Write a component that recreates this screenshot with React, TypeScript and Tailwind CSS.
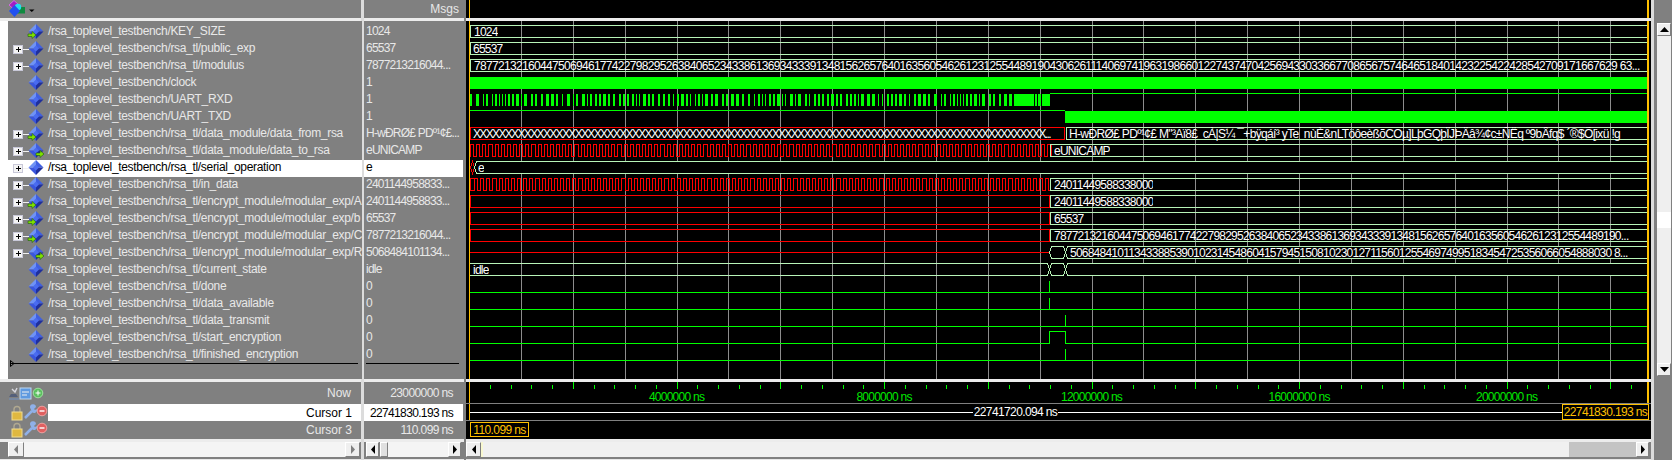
import React from "react";

const RED = "#ff0000";
const GREEN = "#00ff00";
const PALE = "#b8f4b8";
const lx = (x: number) => x - 466;
const gridX = (k: number) => Math.round(lx(469 + 51.88 * k)) + 0.5;

function bus(x0: number, x1: number, color: string) {
  const a = lx(x0) + 0.5, b = lx(x1) + 0.5;
  return <path d={`M${a} 7.5L${a + 2} 1.5H${b - 2}L${b} 7.5L${b - 2} 13.5H${a + 2}Z`} fill="black" stroke={color} />;
}
function busOpen(x0: number) {
  const a = lx(x0) + 0.5, b = lx(1647);
  return <path d={`M${b} 1.5H${a + 2}L${a} 7.5L${a + 2} 13.5H${b}`} fill="black" stroke={PALE} />;
}
function rails(x0: number, x1: number, color: string) {
  const a = lx(x0) + 0.5, b = lx(x1) + 0.5;
  return <path d={`M${a} 1.5H${b}V13.5H${a}Z`} fill="none" stroke={color} />;
}
function dense(x0: number, x1: number) {
  let x = lx(x0) + 0.5;
  const end = lx(x1);
  let d = `M${x} 13.5`;
  let i = 0;
  while (x < end) {
    const w = i % 7 === 3 ? 4 : 3;
    d += `V1.5H${x + w}V13.5H${x + w + 3}`;
    x += w + 3;
    i++;
  }
  return <path d={d} fill="none" stroke={RED} />;
}
function rxdBars() {
  const out: React.ReactNode[] = [];
  let x = 470;
  let s = 37;
  while (x < 1016) {
    s = (s * 73 + 41) % 101;
    const w = s % 4 === 0 ? 1 : s % 4 === 1 ? 3 : 2;
    out.push(<rect key={x} x={lx(x)} y={2} width={w} height={12} fill={GREEN} />);
    x += w + (s % 5 === 0 ? 4 : s % 5 === 1 ? 3 : 2);
  }
  return out;
}

type W = { svg?: React.ReactNode; text?: string; left?: number; w?: number; tc?: string; name: string; value: string; plus?: boolean; arrow?: "l" | "r"; selected?: boolean };

const P = "/rsa_toplevel_testbench/";
const TL = P + "rsa_tl/";
const MOD = TL + "encrypt_module/modular_exp/";
const low = (extra?: React.ReactNode) => (
  <>
    <path d={`M${lx(470)} 13.5H${lx(1647)}`} stroke={GREEN} />
    {extra}
  </>
);
const spike = (x: number) => <path d={`M${lx(x) + 0.5} 2V13`} stroke={GREEN} />;

const XS = "X".repeat(90) + "...";
const rows: W[] = [
  { name: P + "KEY_SIZE", value: "1024", arrow: "l", svg: rails(470, 1648, PALE), text: "1024", left: 474 },
  { name: TL + "public_exp", value: "65537", plus: true, svg: rails(470, 1648, PALE), text: "65537", left: 473 },
  { name: TL + "modulus", value: "7877213216044...", plus: true, svg: rails(470, 1648, PALE), text: "78772132160447506946177422798295263840652343386136934333913481562657640163560546261231255448919043062611140697419631986601227437470425694330336677086567574646518401423225422428542709171667629 63...", left: 474, w: 1172, tc: "tracking-[-0.68px]" },
  { name: P + "clock", value: "1", svg: <><rect x={lx(470)} y={2} width={1177} height={12} fill={GREEN} /><rect x={lx(1647)} y={2} width={1} height={12} fill={RED} /></> },
  { name: P + "UART_RXD", value: "1", svg: <>{rxdBars()}<rect x={lx(1016)} y={2} width={18} height={12} fill={GREEN} /><rect x={lx(1035)} y={2} width={2} height={12} fill={GREEN} /><rect x={lx(1038)} y={2} width={3} height={12} fill={GREEN} /><rect x={lx(1042)} y={2} width={8} height={12} fill={GREEN} /><path d={`M${lx(1050)} 1.5H${lx(1647)}`} stroke={GREEN} /></> },
  { name: P + "UART_TXD", value: "1", svg: <><path d={`M${lx(470)} 1.5H${lx(1065)}`} stroke={GREEN} /><rect x={lx(1065)} y={2} width={582} height={12} fill={GREEN} /></> },
  { name: TL + "data_module/data_from_rsa", value: "H-wÐRØ£ PDº¹¢£...", plus: true, arrow: "l", svg: <>{rails(470, 1064, RED)}{rails(1066, 1648, PALE)}</> },
  { name: TL + "data_module/data_to_rsa", value: "eUNICAMP", plus: true, arrow: "r", svg: <>{dense(470, 1049)}{rails(1050, 1648, PALE)}</>, text: "eUNICAMP", left: 1054 },
  { name: TL + "serial_operation", value: "e", plus: true, selected: true, svg: <>{bus(470, 474, RED)}{busOpen(474)}</>, text: "e", left: 478 },
  { name: TL + "in_data", value: "2401144958833...", plus: true, svg: <>{rails(470, 474, RED)}{dense(474, 1049)}{rails(1050, 1648, PALE)}</>, text: "24011449588338000", left: 1054 },
  { name: MOD + "A", value: "2401144958833...", plus: true, arrow: "l", svg: <>{rails(470, 1049, RED)}{rails(1050, 1648, PALE)}</>, text: "24011449588338000", left: 1054 },
  { name: MOD + "b", value: "65537", plus: true, arrow: "l", svg: <>{rails(470, 1049, RED)}{rails(1050, 1648, PALE)}</>, text: "65537", left: 1054 },
  { name: MOD + "C", value: "7877213216044...", plus: true, arrow: "l", svg: <>{rails(470, 1049, RED)}{rails(1050, 1648, PALE)}</>, text: "787721321604475069461774227982952638406523433861369343339134815626576401635605462612312554489190...", left: 1054, w: 590 },
  { name: MOD + "R", value: "5068484101134...", plus: true, arrow: "r", svg: <><path d={`M${lx(470)} 7.5H${lx(1049)}`} stroke={RED} />{bus(1049, 1065, PALE)}{busOpen(1065)}</>, text: "50684841011343388539010231454860415794515081023012711560125546974995183454725356066054888030 8...", left: 1070, w: 574 },
  { name: TL + "current_state", value: "idle", svg: <><path d={`M${lx(470)} 1.5H${lx(1047) + 0.5}L${lx(1049) + 0.5} 7.5L${lx(1047) + 0.5} 13.5H${lx(470)}`} fill="none" stroke={PALE} />{bus(1049, 1065, PALE)}{busOpen(1065)}</>, text: "idle", left: 473 },
  { name: TL + "done", value: "0", svg: low(spike(1049)) },
  { name: TL + "data_available", value: "0", svg: low(spike(1049)) },
  { name: TL + "data_transmit", value: "0", svg: low(spike(1065)) },
  { name: TL + "start_encryption", value: "0", svg: <path d={`M${lx(470)} 13.5H${lx(1049) + 0.5}V1.5H${lx(1065) + 0.5}V13.5H${lx(1647)}`} fill="none" stroke={GREEN} /> },
  { name: TL + "finished_encryption", value: "0", svg: low(spike(1065)) },
];

function Diamond({ cx, cy, r }: { cx: number; cy: number; r: number }) {
  return (
    <g>
      <polygon points={`${cx - r},${cy} ${cx},${cy - r} ${cx},${cy}`} fill="#6f93f5" />
      <polygon points={`${cx},${cy - r} ${cx + r},${cy} ${cx},${cy}`} fill="#3f5fe0" />
      <polygon points={`${cx - r},${cy} ${cx},${cy + r} ${cx},${cy}`} fill="#3a56dc" />
      <polygon points={`${cx + r},${cy} ${cx},${cy + r} ${cx},${cy}`} fill="#1f2f9c" />
      <polygon points={`${cx - 3},${cy} ${cx},${cy - 3} ${cx + 3},${cy} ${cx},${cy + 3}`} fill="#4a6cf0" />
    </g>
  );
}

function RowIcon({ plus, arrow }: { plus?: boolean; arrow?: "l" | "r" }) {
  const ax = arrow === "l" ? 20 : 28;
  return (
    <svg width={40} height={17} className="shrink-0">
      {plus && (
        <g shapeRendering="crispEdges">
          <path d="M15 8.5H21" stroke="#f0f0f0" />
          <rect x={5.5} y={4.5} width={9} height={8} fill="#f4f4f4" stroke="#c8c8d8" />
          <path d="M7.5 8.5H12.5M10 6V11" stroke="#000" />
        </g>
      )}
      <Diamond cx={28} cy={7.5} r={7.5} />
      {arrow && (
        <path
          d={`M${ax} 10H${ax + 4}V7.5L${ax + 8} 11L${ax + 4} 14.5V12.5H${ax}Z`}
          fill="#7fe000"
          stroke="#1c5a10"
          strokeWidth={0.6}
        />
      )}
    </svg>
  );
}

function Btn({ dir, muted, className }: { dir: "l" | "r"; muted?: boolean; className: string }) {
  return (
    <div className={`flex items-center justify-center bg-[#efefef] border border-t-white border-l-white border-b-[#808080] border-r-[#808080] ${className}`}>
      <svg width={6} height={9}>
        <path d={dir === "l" ? "M5 0V9L1 4.5Z" : "M1 0V9L5 4.5Z"} fill={muted ? "#808080" : "#000"} />
      </svg>
    </div>
  );
}

function NameCol() {
  return (
    <div className="flex w-[361px] shrink-0 flex-col">
      <div className="flex h-[18px] items-center">
        <svg width={36} height={18}>
          <polygon points="14,0.5 19,5 14,9.5 9,5" fill="#a020c0" stroke="#e070f0" strokeWidth={0.8} />
          <rect x={15} y={7} width={10} height={6.5} fill="#108a40" />
          <circle cx={18} cy={7} r={3.2} fill="#20e0f0" />
          <polygon points="14.5,5 20,11 14.5,17 9,11" fill="#2050f0" />
          <path d="M29 9.5H34.5L31.75 12Z" fill="#000" />
        </svg>
      </div>
      <div className="h-[3px] bg-[#ececec]" />
      <div className="relative flex h-[358px] bg-white">
        <div className="w-2 shrink-0" />
        <div className="flex-1 bg-[#808080] pt-[3px]">
          {rows.map((r) => (
            <div key={r.name} className={`flex h-[17px] ${r.selected ? "bg-white text-black" : "text-[#e8e8e8]"}`}>
              <RowIcon plus={r.plus} arrow={r.arrow} />
              <span className="whitespace-nowrap leading-[14px] tracking-[-0.32px]">{r.name}</span>
            </div>
          ))}
          <div className="relative -mt-[1px] ml-[3px] mr-1 h-px bg-black">
            <svg width={5} height={7} className="absolute -left-px -top-[3px]">
              <path d="M0.5 0.5V6.5L4 3.5Z" fill="none" stroke="#000" />
            </svg>
          </div>
        </div>
      </div>
      <div className="h-[3px] bg-[#ececec]" />
      <div className="h-[57px]">
        <div className="flex h-[22px] items-center pl-[8px] pr-[10px] text-[#e8e8e8]">
          <svg width={40} height={16}>
            <path d="M1 12H10L8 9H3Z" fill="#55607a" />
            <path d="M4 4L7 7L9 3" fill="none" stroke="#d8d8e0" strokeWidth={1.4} />
            <path d="M1 14H11" stroke="#7090c0" />
            <rect x={12} y={3} width={11} height={11} fill="#5f9ae0" stroke="#c0d8f0" />
            <path d="M14 7H21M14 10H19" stroke="#f0f0f0" />
            <circle cx={30} cy={8} r={4.8} fill="#5cc060" stroke="#a0e0a0" />
            <path d="M27.5 8H32.5M30 5.5V10.5" stroke="#fff" />
          </svg>
          <span className="ml-auto leading-[20px]">Now</span>
        </div>
        <div className="flex h-[17px]">
          <CursorIcons />
          <div className="flex flex-1 items-center justify-end bg-white pr-[9px] leading-[14px] text-black">Cursor 1</div>
        </div>
        <div className="flex h-[17px]">
          <CursorIcons />
          <div className="flex flex-1 items-center justify-end pr-[9px] leading-[14px] text-[#e8e8e8]">Cursor 3</div>
        </div>
      </div>
      <div className="h-[3px] bg-[#ececec]" />
      <div className="flex h-[15px] pl-2 pr-px">
        <Btn dir="l" muted className="h-[15px] w-4 shrink-0" />
        <div className="flex-1 bg-[#f4f4f4]" />
        <Btn dir="r" muted className="h-[15px] w-[15px] shrink-0" />
      </div>
      <div className="mt-[2px] h-px bg-[#e8e8e8]" />
    </div>
  );
}

function CursorIcons() {
  return (
    <svg width={40} height={17} className="shrink-0 ml-2">
      <path d="M6 8V5.5A3 3 0 0 1 12 5.5V8" fill="none" stroke="#b0a890" strokeWidth={1.4} />
      <rect x={4} y={8} width={10} height={8} fill="#e0b840" stroke="#f0dc90" />
      <path d="M17 14L24 7" stroke="#8fb0e8" strokeWidth={2.5} />
      <path d="M22 3.5A3 3 0 0 1 28 3L26 5L27 6L29 5A3 3 0 0 1 24 8Z" fill="#8fb0e8" />
      <circle cx={34} cy={7} r={4.8} fill="#e06060" stroke="#f0a0a0" />
      <path d="M31.5 7H36.5" stroke="#fff" strokeWidth={1.4} />
    </svg>
  );
}

function ValueCol() {
  return (
    <div className="flex w-[100px] shrink-0 flex-col">
      <div className="flex h-[18px] items-center justify-end pr-[5px] leading-[16px] text-[#e8e8e8]">Msgs</div>
      <div className="h-[3px] bg-[#ececec]" />
      <div className="h-[358px] pt-[3px]">
        {rows.map((r) => (
          <div key={r.name} className={`flex h-[17px] w-[99px] pl-[2px] ${r.selected ? "bg-white text-black" : "text-[#e8e8e8]"}`}>
            <span className="whitespace-nowrap leading-[14px] tracking-[-0.78px]">{r.value}</span>
          </div>
        ))}
        <div className="-mt-[1px] ml-[2px] mr-[5px] h-px bg-black" />
      </div>
      <div className="h-[3px] bg-[#ececec]" />
      <div className="h-[57px]">
        <div className="flex h-[22px] items-center justify-end pr-[11px] tracking-[-0.6px] text-[#e8e8e8]">23000000 ns</div>
        <div className="flex h-[17px] w-[99px] items-center justify-end bg-white pr-[10px] tracking-[-0.65px] text-black">22741830.193 ns</div>
        <div className="flex h-[17px] items-center justify-end pr-[11px] tracking-[-0.6px] text-[#e8e8e8]">110.099 ns</div>
      </div>
      <div className="h-[3px] bg-[#ececec]" />
      <div className="flex h-[15px] pl-[2px] pr-[3px]">
        <Btn dir="l" className="h-[15px] w-[13px] shrink-0" />
        <div className="ml-px h-[15px] w-[8px] shrink-0 border border-t-white border-l-white border-b-[#808080] border-r-[#808080] bg-[#e0e0e0]" />
        <div className="flex-1 bg-[#f4f4f4]" />
        <Btn dir="r" className="h-[15px] w-[13px] shrink-0" />
      </div>
      <div className="mt-[2px] h-px bg-[#e8e8e8]" />
    </div>
  );
}

function WaveRow({ r }: { r: W }) {
  const isFrom = r.name.endsWith("data_from_rsa");
  return (
    <div className="relative h-[17px]">
      <svg width={1185} height={17} className="absolute inset-0 overflow-hidden" shapeRendering="crispEdges">
        {r.svg}
      </svg>
      {isFrom && (
        <>
          <span className="absolute left-[7px] top-[1px] w-[590px] overflow-hidden whitespace-nowrap leading-[14px] tracking-[-1.65px] text-white">{XS}</span>
          <span className="absolute left-[603px] top-[1px] w-[575px] overflow-hidden whitespace-pre leading-[14px] tracking-[-0.65px] text-white">
            {"H-wÐRØ£ PDº¹¢£ M\"³Aï8£  cÀ|S¼ ¯+bÿqáí³ yTe  nùÈ&nLTöôeèßõCOµ]LþGQþÏJÞÄâ¾¢c±ÑËq º9bÂfq$ ´®$Õ[ixü !g"}
          </span>
        </>
      )}
      {r.text && (
        <span
          className={`absolute top-[1px] overflow-hidden whitespace-pre leading-[14px] text-white ${r.tc ?? "tracking-[-0.77px]"}`}
          style={{ left: (r.left ?? 470) - 466, width: r.w }}
        >
          {r.text}
        </span>
      )}
    </div>
  );
}

function WaveCol() {
  const small = Array.from({ length: 57 }, (_, i) => i);
  const labels = [4, 8, 12, 16, 20];
  return (
    <div className="flex w-[1185px] shrink-0 flex-col">
      <div className="relative h-[18px] bg-black">
        <div className="absolute bottom-0 left-[3px] top-0 w-px bg-[#ffc000]" />
        <div className="absolute bottom-0 left-[1181px] top-0 w-[2px] bg-[#ffc000]" />
      </div>
      <div className="h-[3px] bg-[#ececec]" />
      <div className="relative h-[358px] bg-black">
        <svg width={1185} height={358} className="absolute inset-0" shapeRendering="crispEdges">
          {Array.from({ length: 22 }, (_, i) => (
            <path key={i} d={`M${gridX(i + 1)} 0V358`} stroke="#8c8c8c" />
          ))}
        </svg>
        <div className="relative pt-[3px]">
          {rows.map((r) => (
            <WaveRow key={r.name} r={r} />
          ))}
        </div>
        <div className="absolute bottom-0 left-[3px] top-0 w-px bg-[#ffc000]" />
        <div className="absolute bottom-0 left-[1181px] top-0 w-[2px] bg-[#ffc000]" />
      </div>
      <div className="h-[3px] bg-[#ececec]" />
      <div className="h-[57px] bg-black">
        <div className="relative h-[22px] border-b border-[#808080]">
          <svg width={1185} height={8} className="absolute left-0 top-0" shapeRendering="crispEdges">
            {small.map((i) => {
              const x = Math.round(lx(469 + 20.752 * (i + 1))) + 0.5;
              return <path key={i} d={`M${x} ${i % 5 === 4 ? 0 : 3}V7`} stroke={GREEN} />;
            })}
          </svg>
          {labels.map((m) => (
            <span
              key={m}
              className="absolute top-[8px] -translate-x-1/2 whitespace-nowrap leading-[14px] tracking-[-0.75px] text-[#00e800]"
              style={{ left: lx(469 + 51.88 * m) }}
            >
              {m}000000 ns
            </span>
          ))}
          <div className="absolute bottom-0 left-[3px] top-0 w-px bg-[#ffc000]" />
          <div className="absolute bottom-0 left-[1181px] top-0 w-[2px] bg-[#ffc000]" />
        </div>
        <div className="relative flex h-[17px] items-center border-b border-[#808080] pl-[3px] pr-[2px]">
          <div className="h-px flex-1 bg-white" />
          <span className="px-[1px] leading-[14px] tracking-[-0.62px] text-white">22741720.094 ns</span>
          <div className="h-px flex-1 bg-white" />
          <span className="flex h-[16px] w-[87px] items-center justify-center border border-[#ffc000] leading-[14px] tracking-[-0.62px] text-[#ffc000]">22741830.193 ns</span>
          <div className="absolute bottom-0 left-[3px] top-0 w-px bg-[#ffc000]" />
        </div>
        <div className="pl-[4px] pt-[1px]">
          <span className="flex h-[15px] w-[59px] items-center justify-center border border-[#ffc000] leading-[14px] tracking-[-0.62px] text-[#ffc000]">110.099 ns</span>
        </div>
      </div>
      <div className="h-[3px] bg-[#ececec]" />
      <div className="flex h-[15px] pr-[2px]">
        <Btn dir="l" className="h-[15px] w-[15px] shrink-0" />
        <div className="h-[15px] w-[2px] shrink-0 bg-[#f8f8d0]" />
        <div className="flex-1 bg-[#f0f0f0]" />
        <div className="h-[15px] w-[67px] shrink-0 bg-[#c4c4c4]" />
        <Btn dir="r" className="h-[15px] w-[13px] shrink-0" />
      </div>
      <div className="mt-[2px] h-px bg-[#e8e8e8]" />
    </div>
  );
}

function VScroll() {
  return (
    <div className="flex w-[18px] shrink-0 flex-col">
      <div className="h-[21px]" />
      <div className="flex h-[358px] flex-col pl-[3px] pr-px pt-[2px]">
        <div className="flex h-[13px] items-center justify-center border border-t-white border-l-white border-b-[#808080] border-r-[#808080] bg-[#efefef]">
          <svg width={9} height={5}><path d="M0 5H9L4.5 0Z" fill="#000" /></svg>
        </div>
        <div className="flex-1 bg-[#efefef]">
          <div className="mt-[176px] h-[16px] bg-white" />
        </div>
        <div className="flex h-[13px] items-center justify-center border border-t-white border-l-white border-b-[#808080] border-r-[#808080] bg-[#efefef]">
          <svg width={9} height={5}><path d="M0 0H9L4.5 5Z" fill="#000" /></svg>
        </div>
        <div className="h-[3px]" />
      </div>
    </div>
  );
}

export default function App() {
  return (
    <div className="flex h-[460px] w-[1672px] overflow-hidden bg-[#808080] text-[12px] [font-family:'Liberation_Sans',Arial,sans-serif]">
      <NameCol />
      <div className="w-[3px] shrink-0 bg-[#dcdcdc]" />
      <ValueCol />
      <div className="w-[2px] shrink-0" />
      <WaveCol />
      <div className="w-[3px] shrink-0 bg-[#dcdcdc]" />
      <VScroll />
    </div>
  );
}
